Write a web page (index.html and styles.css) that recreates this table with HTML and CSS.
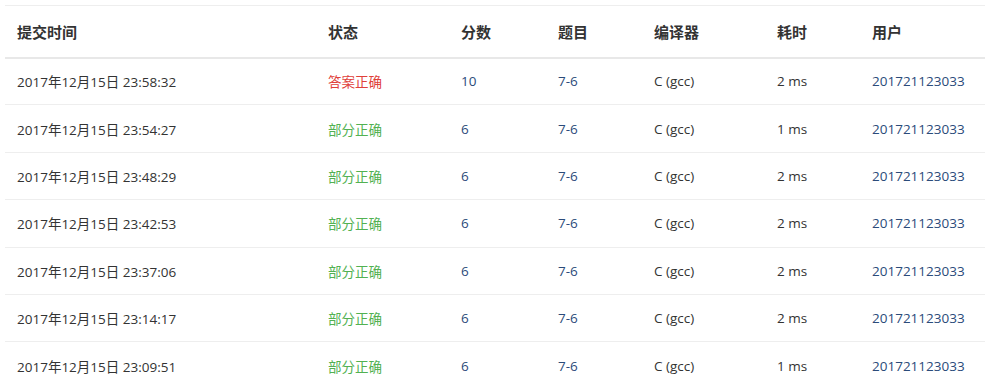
FILE: index.html
```html
<!DOCTYPE html>
<html lang="zh-CN">
<head>
<meta charset="utf-8">
<title>提交列表</title>
<link rel="stylesheet" href="styles.css">
</head>
<body>
<div class="wrap">
<table class="subs">
<colgroup>
<col class="c1"><col class="c2"><col class="c3"><col class="c4"><col class="c5"><col class="c6"><col class="c7">
</colgroup>
<thead>
<tr><th>提交时间</th><th>状态</th><th>分数</th><th>题目</th><th>编译器</th><th>耗时</th><th>用户</th></tr>
</thead>
<tbody>
<tr><td>2017年12月15日 23:58:32</td><td class="ok">答案正确</td><td class="lnk">10</td><td class="lnk">7-6</td><td>C (gcc)</td><td>2 ms</td><td class="lnk">201721123033</td></tr>
<tr><td>2017年12月15日 23:54:27</td><td class="part">部分正确</td><td class="lnk">6</td><td class="lnk">7-6</td><td>C (gcc)</td><td>1 ms</td><td class="lnk">201721123033</td></tr>
<tr><td>2017年12月15日 23:48:29</td><td class="part">部分正确</td><td class="lnk">6</td><td class="lnk">7-6</td><td>C (gcc)</td><td>2 ms</td><td class="lnk">201721123033</td></tr>
<tr><td>2017年12月15日 23:42:53</td><td class="part">部分正确</td><td class="lnk">6</td><td class="lnk">7-6</td><td>C (gcc)</td><td>2 ms</td><td class="lnk">201721123033</td></tr>
<tr><td>2017年12月15日 23:37:06</td><td class="part">部分正确</td><td class="lnk">6</td><td class="lnk">7-6</td><td>C (gcc)</td><td>2 ms</td><td class="lnk">201721123033</td></tr>
<tr><td>2017年12月15日 23:14:17</td><td class="part">部分正确</td><td class="lnk">6</td><td class="lnk">7-6</td><td>C (gcc)</td><td>2 ms</td><td class="lnk">201721123033</td></tr>
<tr><td>2017年12月15日 23:09:51</td><td class="part">部分正确</td><td class="lnk">6</td><td class="lnk">7-6</td><td>C (gcc)</td><td>1 ms</td><td class="lnk">201721123033</td></tr>
</tbody>
</table>
</div>
</body>
</html>
```
FILE: styles.css
```css
html, body {
  margin: 0;
  padding: 0;
  background: #fff;
}
body {
  font-family: "Open Sans", "Noto Sans CJK SC", sans-serif;
  color: #333;
  overflow: hidden;
}
.wrap {
  padding: 5px 2px 0 5px;
}
.subs {
  width: 980px;
  border-collapse: collapse;
  table-layout: fixed;
  border-top: 1px solid #eee;
}
.c1 { width: 311px; }
.c2 { width: 133px; }
.c3 { width: 97px; }
.c4 { width: 96px; }
.c5 { width: 123px; }
.c6 { width: 95px; }
.c7 { width: 125px; }
.subs th {
  height: 52px;
  padding: 0 12px;
  text-align: left;
  font-size: 15px;
  font-weight: bold;
  color: #333;
  border-bottom: 2px solid #e8e8e8;
  box-sizing: border-box;
}
.subs td {
  height: 47.4px;
  padding: 0 12px;
  font-size: 13.5px;
  border-top: 1px solid #eee;
  white-space: nowrap;
  box-sizing: border-box;
}
.subs tbody tr:first-child td {
  border-top: none;
}
.ok { color: #e0403a; }
.part { color: #52b152; }
.lnk { color: #2b4b7a; }
```
